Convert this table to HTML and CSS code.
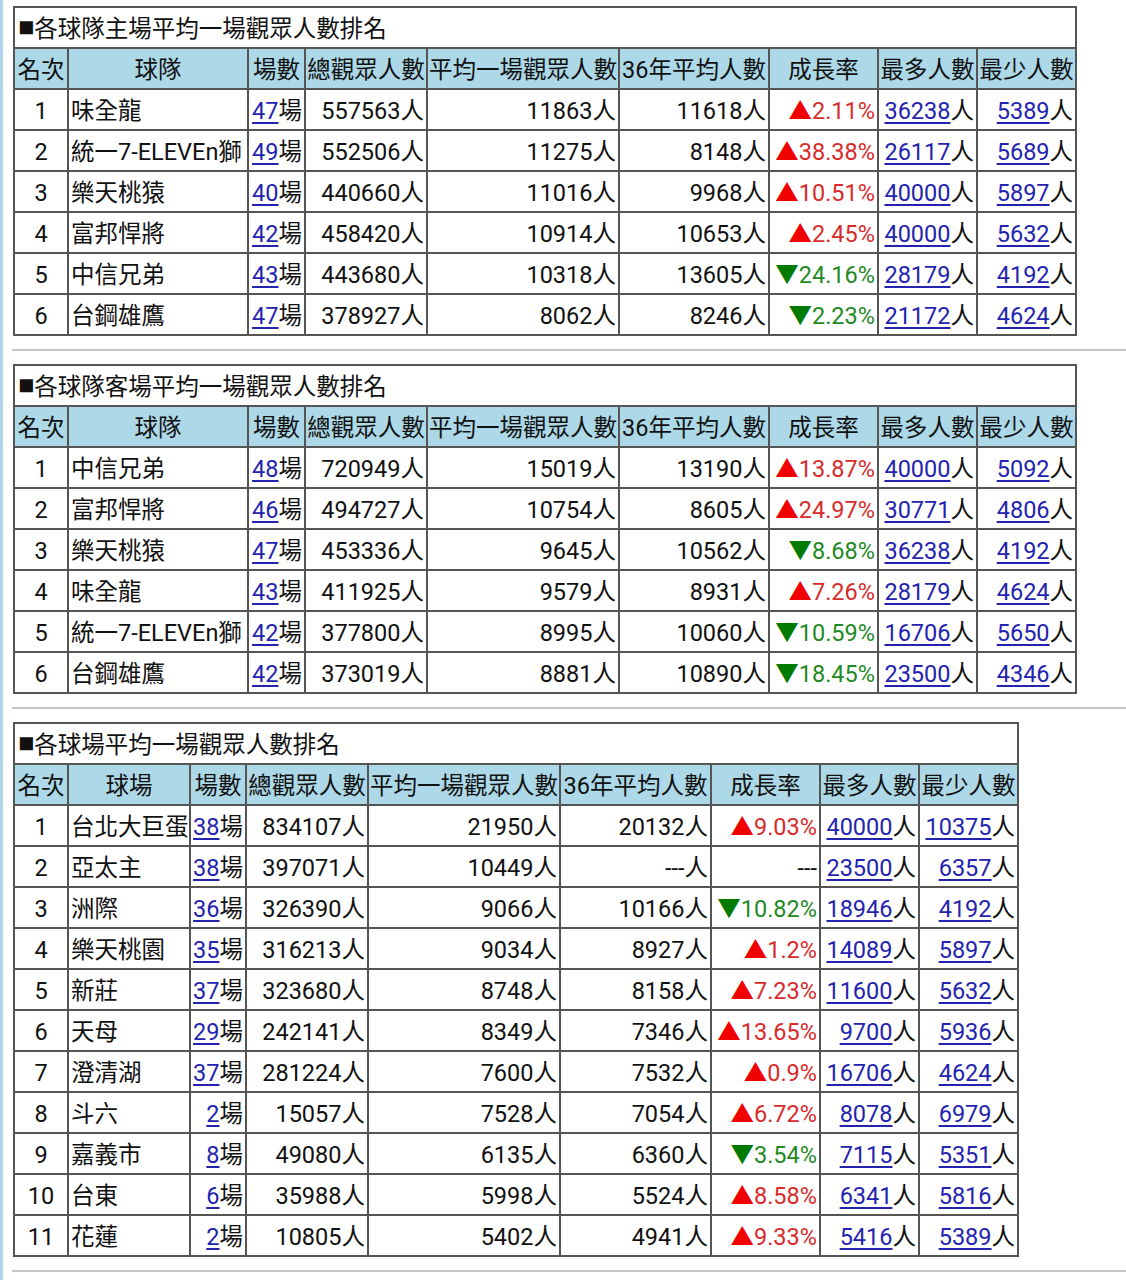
FILE: index.html
```html
<!DOCTYPE html>
<html lang="zh-Hant">
<head>
<meta charset="utf-8">
<title>觀眾人數排名</title>
<link rel="stylesheet" href="styles.css">
</head>
<body>
<div class="page">

<table class="rank team">
<colgroup><col><col><col><col><col><col><col><col><col></colgroup>
<tr><td class="title" colspan="9"><span class="mark">■</span>各球隊主場平均一場觀眾人數排名</td></tr>
<tr class="head"><th>名次</th><th>球隊</th><th>場數</th><th>總觀眾人數</th><th>平均一場觀眾人數</th><th>36年平均人數</th><th>成長率</th><th>最多人數</th><th>最少人數</th></tr>
<tr><td class="c">1</td><td class="l">味全龍</td><td><a href="#">47</a>場</td><td>557563人</td><td>11863人</td><td>11618人</td><td class="up"><span class="tri">▲</span>2.11%</td><td><a href="#">36238</a>人</td><td><a href="#">5389</a>人</td></tr>
<tr><td class="c">2</td><td class="l">統一7-ELEVEn獅</td><td><a href="#">49</a>場</td><td>552506人</td><td>11275人</td><td>8148人</td><td class="up"><span class="tri">▲</span>38.38%</td><td><a href="#">26117</a>人</td><td><a href="#">5689</a>人</td></tr>
<tr><td class="c">3</td><td class="l">樂天桃猿</td><td><a href="#">40</a>場</td><td>440660人</td><td>11016人</td><td>9968人</td><td class="up"><span class="tri">▲</span>10.51%</td><td><a href="#">40000</a>人</td><td><a href="#">5897</a>人</td></tr>
<tr><td class="c">4</td><td class="l">富邦悍將</td><td><a href="#">42</a>場</td><td>458420人</td><td>10914人</td><td>10653人</td><td class="up"><span class="tri">▲</span>2.45%</td><td><a href="#">40000</a>人</td><td><a href="#">5632</a>人</td></tr>
<tr><td class="c">5</td><td class="l">中信兄弟</td><td><a href="#">43</a>場</td><td>443680人</td><td>10318人</td><td>13605人</td><td class="down"><span class="tri">▼</span>24.16%</td><td><a href="#">28179</a>人</td><td><a href="#">4192</a>人</td></tr>
<tr><td class="c">6</td><td class="l">台鋼雄鷹</td><td><a href="#">47</a>場</td><td>378927人</td><td>8062人</td><td>8246人</td><td class="down"><span class="tri">▼</span>2.23%</td><td><a href="#">21172</a>人</td><td><a href="#">4624</a>人</td></tr>
</table>

<hr class="sep">

<table class="rank team">
<colgroup><col><col><col><col><col><col><col><col><col></colgroup>
<tr><td class="title" colspan="9"><span class="mark">■</span>各球隊客場平均一場觀眾人數排名</td></tr>
<tr class="head"><th>名次</th><th>球隊</th><th>場數</th><th>總觀眾人數</th><th>平均一場觀眾人數</th><th>36年平均人數</th><th>成長率</th><th>最多人數</th><th>最少人數</th></tr>
<tr><td class="c">1</td><td class="l">中信兄弟</td><td><a href="#">48</a>場</td><td>720949人</td><td>15019人</td><td>13190人</td><td class="up"><span class="tri">▲</span>13.87%</td><td><a href="#">40000</a>人</td><td><a href="#">5092</a>人</td></tr>
<tr><td class="c">2</td><td class="l">富邦悍將</td><td><a href="#">46</a>場</td><td>494727人</td><td>10754人</td><td>8605人</td><td class="up"><span class="tri">▲</span>24.97%</td><td><a href="#">30771</a>人</td><td><a href="#">4806</a>人</td></tr>
<tr><td class="c">3</td><td class="l">樂天桃猿</td><td><a href="#">47</a>場</td><td>453336人</td><td>9645人</td><td>10562人</td><td class="down"><span class="tri">▼</span>8.68%</td><td><a href="#">36238</a>人</td><td><a href="#">4192</a>人</td></tr>
<tr><td class="c">4</td><td class="l">味全龍</td><td><a href="#">43</a>場</td><td>411925人</td><td>9579人</td><td>8931人</td><td class="up"><span class="tri">▲</span>7.26%</td><td><a href="#">28179</a>人</td><td><a href="#">4624</a>人</td></tr>
<tr><td class="c">5</td><td class="l">統一7-ELEVEn獅</td><td><a href="#">42</a>場</td><td>377800人</td><td>8995人</td><td>10060人</td><td class="down"><span class="tri">▼</span>10.59%</td><td><a href="#">16706</a>人</td><td><a href="#">5650</a>人</td></tr>
<tr><td class="c">6</td><td class="l">台鋼雄鷹</td><td><a href="#">42</a>場</td><td>373019人</td><td>8881人</td><td>10890人</td><td class="down"><span class="tri">▼</span>18.45%</td><td><a href="#">23500</a>人</td><td><a href="#">4346</a>人</td></tr>
</table>

<hr class="sep">

<table class="rank venue">
<colgroup><col><col><col><col><col><col><col><col><col></colgroup>
<tr><td class="title" colspan="9"><span class="mark">■</span>各球場平均一場觀眾人數排名</td></tr>
<tr class="head"><th>名次</th><th>球場</th><th>場數</th><th>總觀眾人數</th><th>平均一場觀眾人數</th><th>36年平均人數</th><th>成長率</th><th>最多人數</th><th>最少人數</th></tr>
<tr><td class="c">1</td><td class="l">台北大巨蛋</td><td><a href="#">38</a>場</td><td>834107人</td><td>21950人</td><td>20132人</td><td class="up"><span class="tri">▲</span>9.03%</td><td><a href="#">40000</a>人</td><td><a href="#">10375</a>人</td></tr>
<tr><td class="c">2</td><td class="l">亞太主</td><td><a href="#">38</a>場</td><td>397071人</td><td>10449人</td><td>---人</td><td>---</td><td><a href="#">23500</a>人</td><td><a href="#">6357</a>人</td></tr>
<tr><td class="c">3</td><td class="l">洲際</td><td><a href="#">36</a>場</td><td>326390人</td><td>9066人</td><td>10166人</td><td class="down"><span class="tri">▼</span>10.82%</td><td><a href="#">18946</a>人</td><td><a href="#">4192</a>人</td></tr>
<tr><td class="c">4</td><td class="l">樂天桃園</td><td><a href="#">35</a>場</td><td>316213人</td><td>9034人</td><td>8927人</td><td class="up"><span class="tri">▲</span>1.2%</td><td><a href="#">14089</a>人</td><td><a href="#">5897</a>人</td></tr>
<tr><td class="c">5</td><td class="l">新莊</td><td><a href="#">37</a>場</td><td>323680人</td><td>8748人</td><td>8158人</td><td class="up"><span class="tri">▲</span>7.23%</td><td><a href="#">11600</a>人</td><td><a href="#">5632</a>人</td></tr>
<tr><td class="c">6</td><td class="l">天母</td><td><a href="#">29</a>場</td><td>242141人</td><td>8349人</td><td>7346人</td><td class="up"><span class="tri">▲</span>13.65%</td><td><a href="#">9700</a>人</td><td><a href="#">5936</a>人</td></tr>
<tr><td class="c">7</td><td class="l">澄清湖</td><td><a href="#">37</a>場</td><td>281224人</td><td>7600人</td><td>7532人</td><td class="up"><span class="tri">▲</span>0.9%</td><td><a href="#">16706</a>人</td><td><a href="#">4624</a>人</td></tr>
<tr><td class="c">8</td><td class="l">斗六</td><td><a href="#">2</a>場</td><td>15057人</td><td>7528人</td><td>7054人</td><td class="up"><span class="tri">▲</span>6.72%</td><td><a href="#">8078</a>人</td><td><a href="#">6979</a>人</td></tr>
<tr><td class="c">9</td><td class="l">嘉義市</td><td><a href="#">8</a>場</td><td>49080人</td><td>6135人</td><td>6360人</td><td class="down"><span class="tri">▼</span>3.54%</td><td><a href="#">7115</a>人</td><td><a href="#">5351</a>人</td></tr>
<tr><td class="c">10</td><td class="l">台東</td><td><a href="#">6</a>場</td><td>35988人</td><td>5998人</td><td>5524人</td><td class="up"><span class="tri">▲</span>8.58%</td><td><a href="#">6341</a>人</td><td><a href="#">5816</a>人</td></tr>
<tr><td class="c">11</td><td class="l">花蓮</td><td><a href="#">2</a>場</td><td>10805人</td><td>5402人</td><td>4941人</td><td class="up"><span class="tri">▲</span>9.33%</td><td><a href="#">5416</a>人</td><td><a href="#">5389</a>人</td></tr>
</table>

<hr class="sep">

</div>
</body>
</html>
```

FILE: styles.css
```css
html, body {
  margin: 0;
  padding: 0;
  background: #ffffff;
}

body {
  border-left: 3px solid #aed3ea;
  min-height: 1280px;
  box-sizing: border-box;
  font-family: Roboto, "Noto Sans CJK TC", "Noto Sans", sans-serif;
  color: #111111;
}

.page {
  padding: 6px 0 0 10px;
}

.rank {
  border: 1px solid #555555;
  border-collapse: separate;
  border-spacing: 0;
  table-layout: fixed;
  font-size: 23.5px;
}

.rank td,
.rank th {
  border: 1px solid #555555;
  padding: 4px 2px 0;
  height: 41px;
  line-height: 35px;
  white-space: nowrap;
  text-align: right;
  font-weight: normal;
  overflow: hidden;
  box-sizing: border-box;
}

.rank .head th {
  background: #acd8e7;
  text-align: center;
  padding: 4px 0 0;
}

.rank td.title {
  text-align: left;
  padding-left: 3px;
}

.mark {
  font-family: "Liberation Sans", Arial, sans-serif;
  font-size: 27px;
  line-height: 0;
  vertical-align: 1px;
}

.rank td.c {
  text-align: center;
}

.rank td.l {
  text-align: left;
}

.rank a {
  color: #2323b0;
  text-decoration: underline;
  text-underline-offset: 3px;
}

.up {
  color: #d92a2a;
}

.up .tri {
  color: #f00000;
}

.down {
  color: #1f8a1f;
}

.down .tri {
  color: #007a00;
}

.team {
  width: 1064px;
}

.venue {
  width: 1006px;
}

.team col:nth-child(1) { width: 54px; }
.team col:nth-child(2) { width: 180px; }
.team col:nth-child(3) { width: 57px; }
.team col:nth-child(4) { width: 122px; }
.team col:nth-child(5) { width: 192px; }
.team col:nth-child(6) { width: 150px; }
.team col:nth-child(7) { width: 109px; }
.team col:nth-child(8) { width: 99px; }
.team col:nth-child(9) { width: 99px; }

.venue col:nth-child(1) { width: 54px; }
.venue col:nth-child(2) { width: 122px; }
.venue col:nth-child(3) { width: 56px; }
.venue col:nth-child(4) { width: 122px; }
.venue col:nth-child(5) { width: 192px; }
.venue col:nth-child(6) { width: 151px; }
.venue col:nth-child(7) { width: 109px; }
.venue col:nth-child(8) { width: 99px; }
.venue col:nth-child(9) { width: 99px; }

.sep {
  border: 0;
  border-top: 2px solid #c6c6c6;
  height: 0;
  margin: 13px 0 13px -1px;
}
```
